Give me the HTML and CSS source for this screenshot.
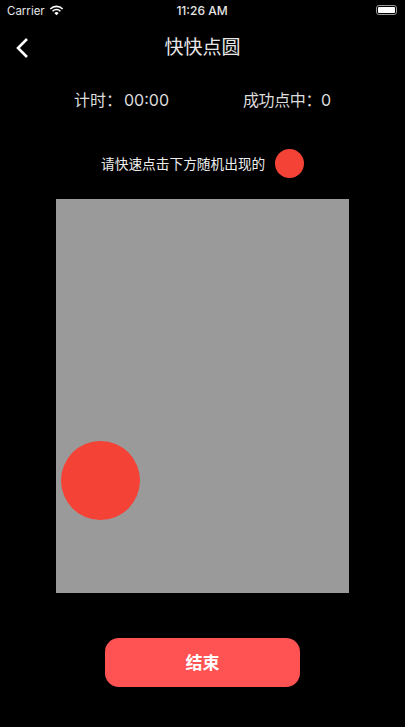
FILE: index.html
```html
<!DOCTYPE html>
<html lang="zh">
<head>
<meta charset="utf-8">
<title>快快点圆</title>
<link rel="stylesheet" href="styles.css">
</head>
<body>
<div class="screen">
  <div class="status">
    <div class="status-left">
      <span>Carrier</span>
      <svg class="wifi" viewBox="0 0 16 12" width="15" height="11"><path d="M8 11.2 5.6 8.7a3.400 3.400 0 0 1 4.800 0Z" fill="#fff"/><path d="M3.700 6.800a6 6 0 0 1 8.600 0M1.300 4.300a9.400 9.400 0 0 1 13.400 0" fill="none" stroke="#fff" stroke-width="1.700"/></svg>
    </div>
    <span class="status-time">11:26 AM</span>
    <div class="battery"><div class="battery-fill"></div></div>
  </div>
  <div class="nav">
    <svg class="back" viewBox="0 0 14 22" width="14" height="22"><path d="M12 2 3 11l9 9" fill="none" stroke="#fff" stroke-width="2.600"/></svg>
    <span class="nav-title">快快点圆</span>
  </div>
  <div class="stats">
    <span class="stat-time">计时：<span class="num-gap">00:00</span></span>
    <span class="stat-hits">成功点中：<span class="num">0</span></span>
  </div>
  <div class="hint">
    <span class="hint-text">请快速点击下方随机出现的</span>
    <div class="hint-dot"></div>
  </div>
  <div class="board">
    <div class="target"></div>
  </div>
  <div class="actions">
    <button class="end-btn">结束</button>
  </div>
</div>
</body>
</html>
```

FILE: styles.css
```css
* { box-sizing: border-box; }
html, body { margin: 0; padding: 0; background: #000; }
body { font-family: "Liberation Sans", "Noto Sans CJK SC", sans-serif; color: #fff; }
.screen { width: 405px; height: 727px; overflow: hidden; background: #000; display: flex; flex-direction: column; }
.status { height: 21px; padding: 0 8px 0 7px; display: grid; grid-template-columns: 1fr auto 1fr; align-items: center; font-size: 11.5px; color: #e6e6e6; font-family: "Inter", "Liberation Sans", sans-serif; }
.status-left { display: flex; align-items: center; gap: 4px; }
.status-time { font-weight: 500; font-size: 12px; }
.wifi { display: block; margin-top: -1px; }
.battery { justify-self: end; width: 21px; height: 10px; border: 1px solid #999; border-radius: 3px; padding: 1px; margin-top: -1px; }
.battery-fill { height: 100%; background: #fff; border-radius: 1px; }
.nav { height: 54px; padding-bottom: 6px; position: relative; display: flex; align-items: center; justify-content: center; }
.back { position: absolute; left: 15px; top: 16px; }
.nav-title { font-size: 19px; color: #e8e8e8; }
.stats { height: 50px; padding: 0 0 2px 74px; display: flex; align-items: center; font-size: 16px; color: #ddd; }
.stat-time { width: 169px; }
.stat-hits { letter-spacing: -0.4px; }
.num-gap { font-family: "Inter", sans-serif; margin-left: 2px; }
.num { font-family: "Inter", sans-serif; }
.hint { height: 53px; padding: 0 0 0 101px; margin-top: 12px; display: flex; align-items: center; gap: 10px; font-size: 13.7px; color: #eee; }
.hint-text { margin-top: -1px; }
.hint-dot { width: 29px; height: 29px; border-radius: 50%; background: #f44336; }
.board { position: relative; width: 293px; height: 394px; margin: 9px 0 0 56px; background: #9a9a9a; }
.target { position: absolute; left: 5px; top: 242px; width: 78.5px; height: 79px; border-radius: 50%; background: #f44336; }
.actions { margin-top: 45px; display: flex; justify-content: center; }
.end-btn { width: 195px; height: 49px; border: 0; border-radius: 14px; padding: 0 0 3px; background: #ff5252; color: #fff; font: 700 17px "Noto Sans CJK SC", sans-serif; }
```
